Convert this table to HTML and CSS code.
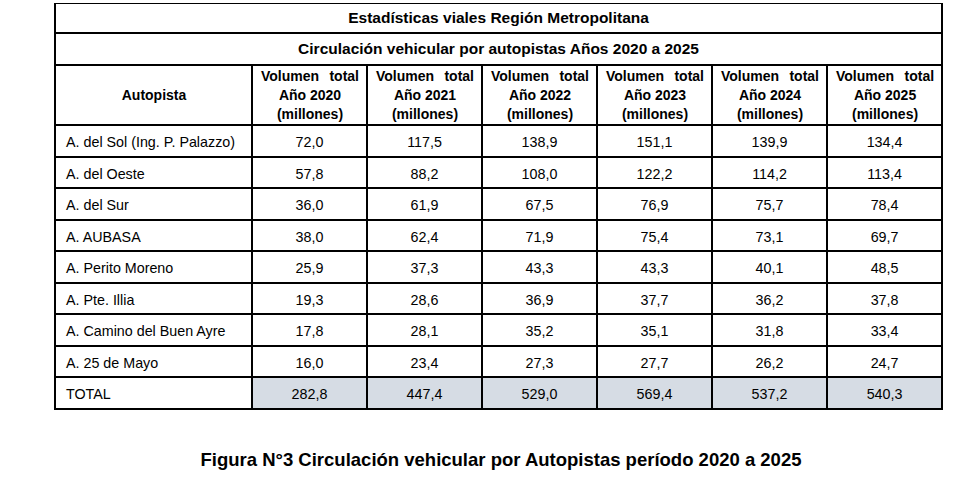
FILE: index.html
```html
<!DOCTYPE html>
<html lang="es">
<head>
<meta charset="utf-8">
<title>Estadísticas viales Región Metropolitana</title>
<link rel="stylesheet" href="styles.css">
</head>
<body>
<main class="page">
  <table class="stats">
    <colgroup>
      <col class="c-name">
      <col class="c-year"><col class="c-year"><col class="c-year">
      <col class="c-year"><col class="c-year"><col class="c-year">
    </colgroup>
    <thead>
      <tr class="r-title"><th colspan="7">Estadísticas viales Región Metropolitana</th></tr>
      <tr class="r-sub"><th colspan="7">Circulación vehicular por autopistas Años 2020 a 2025</th></tr>
      <tr class="r-head">
        <th>Autopista</th>
        <th><span class="just"><span>Volumen</span><span>total</span></span>Año 2020<br>(millones)</th>
        <th><span class="just"><span>Volumen</span><span>total</span></span>Año 2021<br>(millones)</th>
        <th><span class="just"><span>Volumen</span><span>total</span></span>Año 2022<br>(millones)</th>
        <th><span class="just"><span>Volumen</span><span>total</span></span>Año 2023<br>(millones)</th>
        <th><span class="just"><span>Volumen</span><span>total</span></span>Año 2024<br>(millones)</th>
        <th><span class="just"><span>Volumen</span><span>total</span></span>Año 2025<br>(millones)</th>
      </tr>
    </thead>
    <tbody>
      <tr><td>A. del Sol (Ing. P. Palazzo)</td><td>72,0</td><td>117,5</td><td>138,9</td><td>151,1</td><td>139,9</td><td>134,4</td></tr>
      <tr><td>A. del Oeste</td><td>57,8</td><td>88,2</td><td>108,0</td><td>122,2</td><td>114,2</td><td>113,4</td></tr>
      <tr><td>A. del Sur</td><td>36,0</td><td>61,9</td><td>67,5</td><td>76,9</td><td>75,7</td><td>78,4</td></tr>
      <tr><td>A. AUBASA</td><td>38,0</td><td>62,4</td><td>71,9</td><td>75,4</td><td>73,1</td><td>69,7</td></tr>
      <tr><td>A. Perito Moreno</td><td>25,9</td><td>37,3</td><td>43,3</td><td>43,3</td><td>40,1</td><td>48,5</td></tr>
      <tr><td>A. Pte. Illia</td><td>19,3</td><td>28,6</td><td>36,9</td><td>37,7</td><td>36,2</td><td>37,8</td></tr>
      <tr><td>A. Camino del Buen Ayre</td><td>17,8</td><td>28,1</td><td>35,2</td><td>35,1</td><td>31,8</td><td>33,4</td></tr>
      <tr><td>A. 25 de Mayo</td><td>16,0</td><td>23,4</td><td>27,3</td><td>27,7</td><td>26,2</td><td>24,7</td></tr>
      <tr class="r-total"><td>TOTAL</td><td>282,8</td><td>447,4</td><td>529,0</td><td>569,4</td><td>537,2</td><td>540,3</td></tr>
    </tbody>
  </table>
  <p class="caption">Figura N°3 Circulación vehicular por Autopistas período 2020 a 2025</p>
</main>
</body>
</html>
```

FILE: styles.css
```css
html, body {
  margin: 0;
  padding: 0;
  background: #ffffff;
}

body {
  font-family: "Liberation Sans", Arial, sans-serif;
  color: #000000;
}

.page {
  padding: 3px 0 0 54px;
  width: 890px;
}

.stats {
  border-collapse: collapse;
  table-layout: fixed;
  width: 889px;
}

.c-name { width: 197px; }
.c-year { width: 115px; }

.stats th,
.stats td {
  border: 2px solid #000000;
  padding: 0;
}

.r-title th {
  border-top-width: 1px;
  height: 28px;
  font-size: 15.5px;
  font-weight: bold;
  text-align: center;
  vertical-align: middle;
}

.r-sub th {
  height: 30px;
  font-size: 15.5px;
  font-weight: bold;
  text-align: center;
  vertical-align: middle;
}

.r-head th {
  height: 56px;
  font-size: 14px;
  font-weight: bold;
  line-height: 19px;
  text-align: center;
  vertical-align: middle;
  padding: 1px 7px 0 8px;
}

.just {
  display: flex;
  justify-content: space-between;
}

.stats td {
  height: 26.5px;
  font-size: 14.3px;
  text-align: center;
  vertical-align: middle;
  padding-top: 3px;
}

.stats td:first-child {
  text-align: left;
  padding-left: 10px;
}

.r-total td:not(:first-child) {
  background: #d6dce4;
}

.caption {
  margin: 39px 0 0 0;
  padding-left: 4px;
  font-size: 18.5px;
  font-weight: bold;
  text-align: center;
}
```
